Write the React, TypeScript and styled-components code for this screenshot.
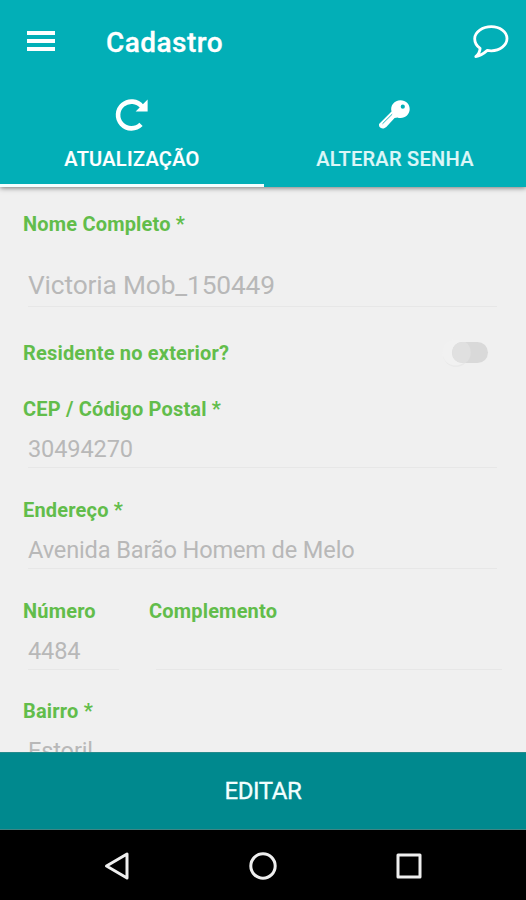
import React from 'react';
import styled, { createGlobalStyle } from 'styled-components';

const GlobalStyle = createGlobalStyle`
  * { box-sizing: border-box; }
  html, body { margin: 0; padding: 0; background: #f0f0f0; }
  body { font-family: Roboto, "Liberation Sans", sans-serif; }
`;

const Screen = styled.div`
  display: flex;
  flex-direction: column;
  width: 526px;
  height: 900px;
  overflow: hidden;
  background: #f0f0f0;
`;

const Header = styled.header`
  flex: none;
  height: 187px;
  background: #02afb7;
  box-shadow: 0 1px 5px rgba(0, 0, 0, 0.5);
  z-index: 1;
`;

const Toolbar = styled.div`
  display: flex;
  align-items: center;
  height: 85px;
  padding: 0 17px 0 27px;
`;

const IconButton = styled.button<{ $lift: number }>`
  display: flex;
  padding: 0 0 ${({ $lift }) => $lift * 2}px;
  border: 0;
  background: none;
`;

const Title = styled.h1`
  flex: 1;
  margin: 0 0 0 51px;
  color: #fff;
  font-size: 28px;
  font-weight: 500;
  line-height: 34px;
  letter-spacing: 0.45px;
  -webkit-text-stroke: 0.3px #fff;
`;

const Tabs = styled.nav`
  display: grid;
  grid-template-columns: 264px 262px;
  height: 102px;
`;

const Tab = styled.button<{ $active?: boolean }>`
  display: flex;
  flex-direction: column;
  align-items: center;
  gap: 14px;
  padding: 12px 0 0;
  border: 0;
  border-bottom: ${({ $active }) => ($active ? '3px solid #f4ffff' : '0')};
  background: none;
  color: ${({ $active }) => ($active ? '#fff' : '#dcf6f7')};
  font: 500 20px/24px Roboto, sans-serif;
  letter-spacing: 0.3px;
  -webkit-text-stroke: 0.2px currentColor;
`;

const Form = styled.main`
  flex: 1;
  min-height: 0;
  overflow: hidden;
  padding: 25px 23px 0;
`;

const Field = styled.div<{ $height: number }>`
  height: ${({ $height }) => $height}px;
`;

const Label = styled.label`
  display: block;
  height: 24px;
  color: #62bd4b;
  font-size: 20px;
  font-weight: 700;
  line-height: 24px;
  letter-spacing: 0.18px;
  white-space: nowrap;
`;

const Value = styled.div<{ $large?: boolean; $wide?: boolean }>`
  height: ${({ $large }) => ($large ? 42 : 34)}px;
  margin: ${({ $large }) => ($large ? '29px' : '13px')} ${({ $wide }) => ($wide ? '1px 0 7px' : '6px 0 5px')};
  border-bottom: 1px solid #e7e7e7;
  color: #b8b8b8;
  font-size: ${({ $large }) => ($large ? 26.3 : 23.6)}px;
  line-height: ${({ $large }) => ($large ? 40 : 30)}px;
  letter-spacing: -0.15px;
  white-space: nowrap;
`;

const SwitchRow = styled.div`
  display: flex;
  justify-content: space-between;
  height: 56px;
`;

const Switch = styled.div`
  display: flex;
  width: 48px;
  height: 32px;
  margin: -4px 13px 0 0;
`;

const FieldPair = styled.div`
  display: grid;
  grid-template-columns: 102px 354px;
  column-gap: 24px;
`;

const EditButton = styled.button`
  flex: none;
  height: 78px;
  padding: 0;
  border: 0;
  border-top: 1px solid #258b8c;
  border-bottom: 1px solid #3f8584;
  background: #00898e;
  color: #f2ffff;
  font: 400 24px/28px Roboto, sans-serif;
  letter-spacing: -0.4px;
  -webkit-text-stroke: 0.3px currentColor;
`;

const SystemBar = styled.footer`
  flex: none;
  height: 70px;
  background: #000;
  display: flex;
  justify-content: space-between;
  align-items: center;
  padding: 1px 102px 0 103px;
`;

const MenuIcon = () => (
  <svg width="28" height="22" viewBox="0 0 28 22" fill="#fff">
    <rect y="1" width="28" height="4" />
    <rect y="9" width="28" height="4" />
    <rect y="17" width="28" height="4" />
  </svg>
);

const ChatIcon = () => (
  <svg width="36" height="34" viewBox="0 0 36 34" fill="none" stroke="#fff" strokeWidth="2.8" strokeLinejoin="round">
    <path d="M18.3 1.7C26.9 1.7 34 7 34 13.6S26.9 25.8 18.3 25.8c-1.4 0-2.7-.1-4-.4C11 28.3 7.5 31 2.8 31.6c2.4-2 4.1-4.8 4.3-8.2C4 21.2 1.7 17.8 1.7 13.7 1.7 7 9.7 1.7 18.3 1.7Z" />
  </svg>
);

const RefreshIcon = () => (
  <svg width="34" height="36" viewBox="0 0 34 36">
    <path d="M26 27.4A13.4 13.4 0 1 1 27 9.7" fill="none" stroke="#fff" strokeWidth="4.6" />
    <path d="M32.6 2.4v12H20.6Z" fill="#fff" />
  </svg>
);

const KeyIcon = () => (
  <svg width="34" height="36" viewBox="0 0 34 36">
    <path
      fill="#fff"
      fillRule="evenodd"
      d="M22.5 3.2c5.3 0 9.2 3.8 9.2 8.8s-4.1 9-9.1 9c-1.4 0-2.3-.3-3.1-.6l-2.9.7-8.3 8.9-2.1 1.3c-1.8.8-4.6-.3-5.1-2.2L1 27.1l12.5-12.7C11.9 8.5 16.4 3.2 22.5 3.2Zm2.3 4.4a2.1 2.1 0 1 0 0 4.2 2.1 2.1 0 0 0 0-4.2Z"
    />
    <path d="M4.5 26.8 14.2 17.2" stroke="#02afb7" strokeWidth="0.9" />
  </svg>
);

const SwitchIcon = () => (
  <svg width="48" height="32" viewBox="0 0 48 32">
    <circle cx="14" cy="17" r="13" fill="#e9e9e9" />
    <circle cx="13.5" cy="15.5" r="13" fill="#f1f1f1" />
    <rect x="10" y="5" width="36" height="21" rx="10.5" fill="#d9d9d9" />
    <path d="M20.5 5h3a13 13 0 0 1 0 21h-3a10.5 10.5 0 0 1 0-21Z" fill="#e0e0e0" />
  </svg>
);

const BackIcon = () => (
  <svg width="28" height="30" viewBox="0 0 28 30" fill="none" stroke="#efefef" strokeWidth="3" strokeLinejoin="round">
    <path d="M24 3v24L3.5 15Z" />
  </svg>
);

const HomeIcon = () => (
  <svg width="30" height="30" viewBox="0 0 30 30" fill="none" stroke="#efefef" strokeWidth="3">
    <circle cx="15" cy="15" r="12.2" />
  </svg>
);

const RecentIcon = () => (
  <svg width="30" height="30" viewBox="0 0 30 30" fill="none" stroke="#efefef" strokeWidth="3" strokeLinejoin="round">
    <rect x="4" y="4" width="22" height="22" />
  </svg>
);

export default function App() {
  return (
    <>
      <GlobalStyle />
      <Screen>
        <Header>
          <Toolbar>
            <IconButton $lift={2} aria-label="Menu"><MenuIcon /></IconButton>
            <Title>Cadastro</Title>
            <IconButton $lift={1} aria-label="Chat"><ChatIcon /></IconButton>
          </Toolbar>
          <Tabs>
            <Tab $active><RefreshIcon />ATUALIZAÇÃO</Tab>
            <Tab><KeyIcon />ALTERAR SENHA</Tab>
          </Tabs>
        </Header>
        <Form>
          <Field $height={129}>
            <Label>Nome Completo *</Label>
            <Value $large>Victoria Mob_150449</Value>
          </Field>
          <SwitchRow>
            <Label>Residente no exterior?</Label>
            <Switch role="switch" aria-checked={false}><SwitchIcon /></Switch>
          </SwitchRow>
          <Field $height={101}>
            <Label>CEP / Código Postal *</Label>
            <Value>30494270</Value>
          </Field>
          <Field $height={101}>
            <Label>Endereço *</Label>
            <Value>Avenida Barão Homem de Melo</Value>
          </Field>
          <FieldPair>
            <Field $height={100}>
              <Label>Número</Label>
              <Value>4484</Value>
            </Field>
            <Field $height={100}>
              <Label>Complemento</Label>
              <Value $wide />
            </Field>
          </FieldPair>
          <Field $height={101}>
            <Label>Bairro *</Label>
            <Value>Estoril</Value>
          </Field>
        </Form>
        <EditButton>EDITAR</EditButton>
        <SystemBar>
          <BackIcon />
          <HomeIcon />
          <RecentIcon />
        </SystemBar>
      </Screen>
    </>
  );
}
